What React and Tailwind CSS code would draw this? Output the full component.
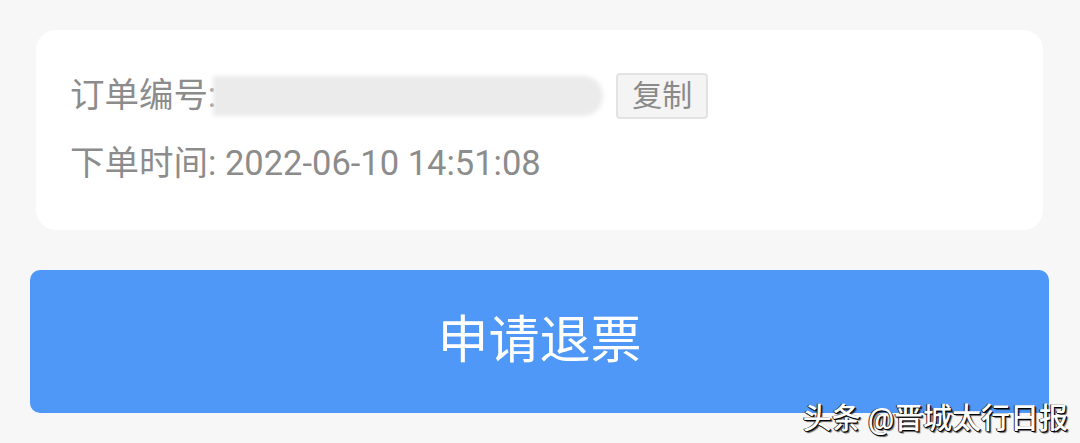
export default function App() {
  const font = { fontFamily: 'Roboto, "Noto Sans CJK SC", sans-serif' };
  return (
    <div className="relative w-[1080px] h-[443px] overflow-hidden bg-[#f7f7f7]" style={font}>
      {/* order info card */}
      <div className="ml-[36px] mr-[37px] mt-[30px] h-[200px] rounded-[20px] bg-white pl-[34px] flex flex-col">
        <div className="mt-[42px] h-[48px] flex items-center text-[34.5px] text-[#8c8c8c]">
          <span>订单编号:</span>
          <div className="ml-[-3px] h-[40px] w-[390px] rounded-r-[20px] bg-[#ebebeb] blur-[2px]" />
          <button className="ml-[13px] h-[46px] w-[92px] rounded-[4px] border-2 border-[#e3e3e3] bg-[#f4f4f4] text-[30px] leading-none text-[#8a8a8a]">
            复制
          </button>
        </div>
        <div className="mt-[20px] h-[48px] flex items-center text-[34.5px] text-[#8c8c8c]">
          下单时间: 2022-06-10 14:51:08
        </div>
      </div>

      {/* refund action */}
      <button className="mt-[40px] ml-[30px] w-[1019px] h-[143px] rounded-[10px] bg-[#4f98f7] text-white text-[51px] flex items-center justify-center">
        申请退票
      </button>

      <div
        className="absolute right-[12px] bottom-[9px] text-[29px] leading-none font-medium text-white"
        style={{ textShadow: '1px 1px 0 #000, -1px 0 0 #333, 0 1px 0 #000, 2px 2px 1px rgba(0,0,0,0.6)' }}
      >
        头条 @晋城太行日报
      </div>
    </div>
  );
}
